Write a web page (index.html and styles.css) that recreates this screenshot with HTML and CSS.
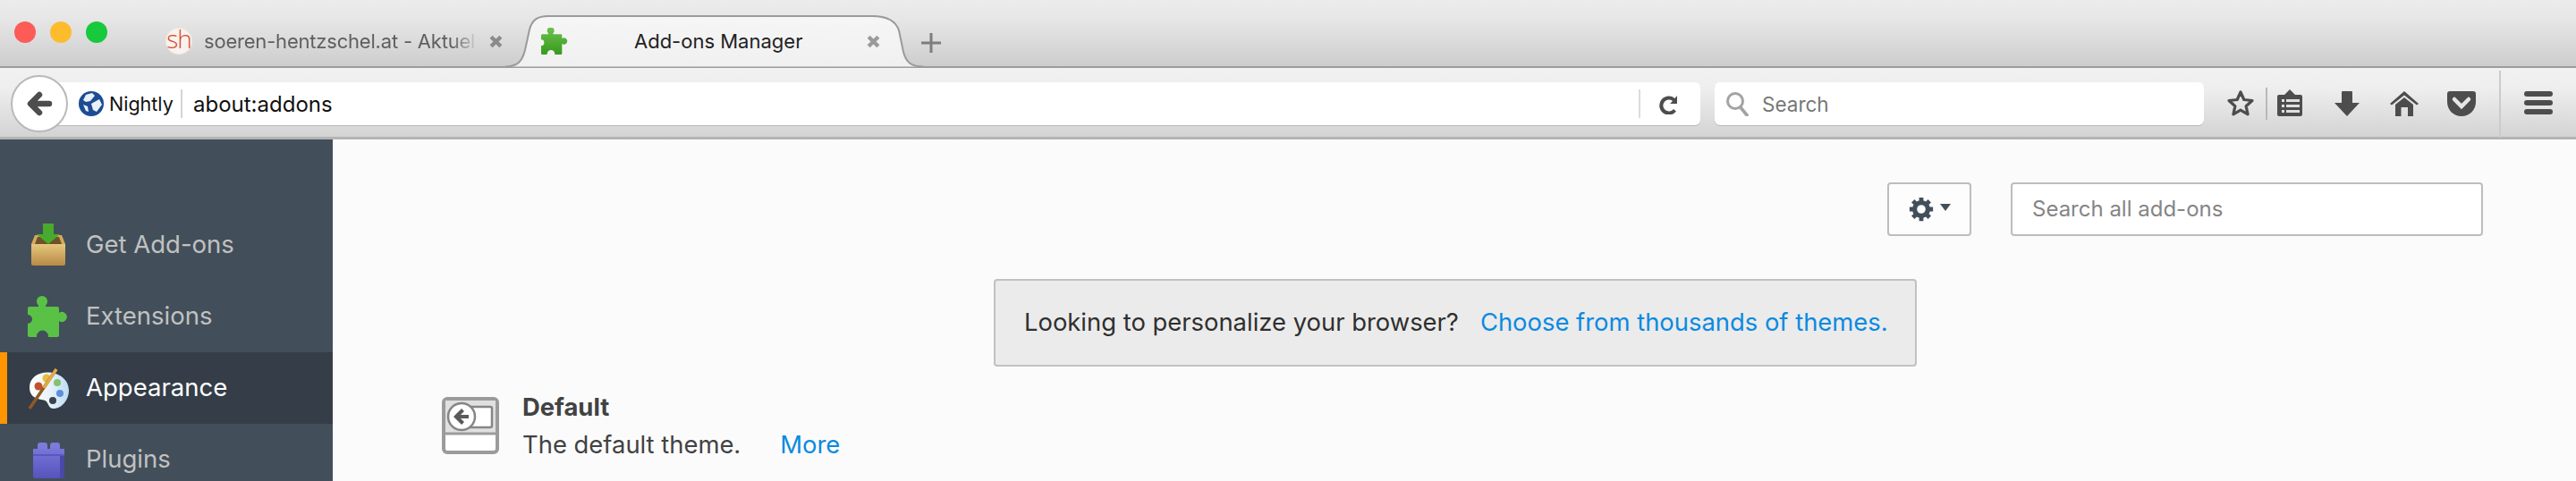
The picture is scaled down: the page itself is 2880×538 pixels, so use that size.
FILE: index.html
```html
<!DOCTYPE html>
<html lang="en">
<head>
<meta charset="utf-8">
<title>Add-ons Manager</title>
<link rel="stylesheet" href="styles.css">
</head>
<body>
<div class="window">
  <header class="tabstrip">
    <div class="lights">
      <span class="light red"></span><span class="light yellow"></span><span class="light green"></span>
    </div>
    <div class="tab">
      <span class="sh">sh</span>
      <span class="tab-title">soeren-hentzschel.at - Aktuel</span>
      <svg class="close" viewBox="0 0 14 14"><path d="M2 2l10 10M12 2L2 12" stroke="#8a8a8a" stroke-width="4" fill="none"/></svg>
    </div>
    <div class="tab active">
      <svg class="active-shape" viewBox="0 0 467 60" preserveAspectRatio="none"><defs><linearGradient id="tabfill" x1="0" y1="0" x2="0" y2="1"><stop offset="0" stop-color="#f6f6f6"/><stop offset="1" stop-color="#f0f0f0"/></linearGradient></defs><path d="M0 58.500C14 58.500 19 52 22 40L27 17C30 6 36 2 48 2H410C424 2 436 6 440 18L445 42C448 54 454 58.500 467 58.500" fill="url(#tabfill)" stroke="#9a9a9a" stroke-width="2"/></svg>
      <svg class="puzzle-small" viewBox="0 0 45 45"><defs><linearGradient id="pz" x1="0" y1="0" x2="0" y2="1"><stop offset="0" stop-color="#6cc24f"/><stop offset="1" stop-color="#379a1e"/></linearGradient></defs><path d="M2 11H12V9.500A6 6 0 1 1 20 9.500V11H33a2 2 0 0 1 2 2v5A5.500 5.500 0 1 1 35 27v16a2 2 0 0 1-2 2H23v-1A6.500 6.500 0 1 0 10 44v1H2a2 2 0 0 1-2-2V30A5 5 0 0 0 0 20V13a2 2 0 0 1 2-2z" fill="url(#pz)"/></svg>
      <span class="tab-title-active">Add-ons Manager</span>
      <svg class="close" viewBox="0 0 14 14"><path d="M2 2l10 10M12 2L2 12" stroke="#9a9a9a" stroke-width="4" fill="none"/></svg>
    </div>
    <svg class="newtab" viewBox="0 0 22 22"><path d="M11 0v22M0 11h22" stroke="#7d7d7d" stroke-width="3"/></svg>
  </header>

  <nav class="navbar">
    <div class="back">
      <svg viewBox="0 0 30 30"><path d="M15 5L5 15l10 10M7 15h19" fill="none" stroke="#4d4d4d" stroke-width="6.500" stroke-linecap="round" stroke-linejoin="round"/></svg>
    </div>
    <div class="urlbar">
      <svg class="globe" viewBox="0 0 28 28"><circle cx="14" cy="14" r="14" fill="#1c4c93"/><path d="M8 4l7-2 3 3-5 6-5 1-3-2zM14 14l9-5 3 6-6 8-4-2zM5 15l5 2 1 6-3-1z" fill="#e9f0f7"/></svg>
      <span class="brand">Nightly</span>
      <span class="url">about:addons</span>
      <span class="url-sep"></span>
      <svg class="reload" viewBox="0 0 24 24"><path d="M20 3v9h-8l3-3a6.500 6.500 0 1 0 1 9l3 2.500A10.500 10.500 0 1 1 17.500 6z" fill="#4d4d4d"/></svg>
    </div>
    <div class="searchbar">
      <svg class="mag" viewBox="0 0 28 28"><circle cx="11" cy="11" r="8.500" fill="none" stroke="#a3a3a3" stroke-width="3"/><path d="M16 17l9 11" stroke="#a3a3a3" stroke-width="3.600"/></svg>
      <span>Search</span>
    </div>
    <div class="toolbar">
      <svg class="tool star" viewBox="0 0 32 32"><path d="M16 3l3.800 8.500 9.200 1-6.900 6.200 2 9.100L16 23.200l-8.100 4.600 2-9.100L3 12.500l9.200-1z" fill="none" stroke="#4d4d4d" stroke-width="3.200" stroke-linejoin="round"/></svg>
      <span class="tool-sep"></span>
      <svg class="tool clip" viewBox="0 0 32 32"><path d="M4 6h6l6-6 6 6h6a2 2 0 0 1 2 2v20a2 2 0 0 1-2 2H4a2 2 0 0 1-2-2V8a2 2 0 0 1 2-2z" fill="#4d4d4d"/><path d="M7 11h3v3H7zM12 11h15v3H12zM7 17h3v3H7zM12 17h15v3H12zM7 23h3v3H7zM12 23h15v3H12z" fill="#e0e0e0"/></svg>
      <svg class="tool down" viewBox="0 0 32 32"><path d="M10 3a1 1 0 0 1 1-1h10a1 1 0 0 1 1 1v12h8L16 30 2 15h8z" fill="#4d4d4d"/></svg>
      <svg class="tool home" viewBox="0 0 32 32"><path d="M16 2l16 14-2 1.500L16 6.500 2 17.500 0 16z" fill="#4d4d4d"/><path d="M16 9l10 8v13h-6V20h-7.500v10H6V17z" fill="#4d4d4d"/></svg>
      <svg class="tool pocket" viewBox="0 0 32 32"><path d="M3 2h26a3 3 0 0 1 3 3v9c0 9-7 16-16 16S0 23 0 14V5a3 3 0 0 1 3-3z" fill="#4d4d4d"/><path d="M8 11l8 8 8-8" fill="none" stroke="#e6e6e6" stroke-width="4.500" stroke-linecap="round"/></svg>
      <span class="menu-sep"></span>
      <div class="hamburger"><i></i><i></i><i></i></div>
    </div>
  </nav>

  <div class="main">
    <aside class="sidebar">
      <div class="cat">
        <svg class="cat-icon" viewBox="0 0 48 50"><defs><linearGradient id="boxf" x1="0" y1="0" x2="0" y2="1"><stop offset="0" stop-color="#e6c77d"/><stop offset="1" stop-color="#b88a45"/></linearGradient></defs><path d="M8 14h30l4 10H4z" fill="#d3a95c"/><path d="M11 16h24l3 8H8z" fill="#6f5229"/><path d="M4 24h38v22a2 2 0 0 1-2 2H6a2 2 0 0 1-2-2z" fill="url(#boxf)"/><path d="M17 1h12v12h7L23 24 10 13h7z" fill="#48ab2d"/></svg>
        <span>Get Add-ons</span>
      </div>
      <div class="cat">
        <svg class="cat-icon" viewBox="0 0 48 50"><path transform="translate(0 3)" d="M2 11H12V9.500A6 6 0 1 1 20 9.500V11H33a2 2 0 0 1 2 2v5A5.500 5.500 0 1 1 35 27v16a2 2 0 0 1-2 2H23v-1A6.500 6.500 0 1 0 10 44v1H2a2 2 0 0 1-2-2V30A5 5 0 0 0 0 20V13a2 2 0 0 1 2-2z" fill="#59c246"/></svg>
        <span>Extensions</span>
      </div>
      <div class="cat selected">
        <svg class="cat-icon" viewBox="0 0 48 50"><defs><linearGradient id="pal" x1="0" y1="0" x2="1" y2="0"><stop offset="0" stop-color="#ffffff"/><stop offset="0.5" stop-color="#e9f3fa"/><stop offset="1" stop-color="#bcdcf4"/></linearGradient></defs><path d="M22 7.500c13 0 24 8 24 20 0 12-9 20.500-17 20.500-7 0-5-8-11-9.500C11 37 2 36 2 24 2 14 11 7.500 22 7.500z" fill="url(#pal)"/><circle cx="12" cy="23" r="4.500" fill="#c5512c"/><circle cx="21" cy="14" r="4.500" fill="#e6bd3f"/><circle cx="33" cy="19" r="4" fill="#85c06b"/><circle cx="36" cy="31" r="4" fill="#5d8fdb"/><circle cx="28" cy="39" r="4" fill="#3a434d"/><path d="M32 4L2 48" stroke="#8f5a26" stroke-width="3.500"/><path d="M32 4L18 25" stroke="#e2ab48" stroke-width="3.500"/></svg>
        <span>Appearance</span>
      </div>
      <div class="cat">
        <svg class="cat-icon" viewBox="0 0 48 50"><defs><linearGradient id="lego" x1="0" y1="0" x2="0" y2="1"><stop offset="0" stop-color="#7876d8"/><stop offset="1" stop-color="#5653bd"/></linearGradient></defs><rect x="11" y="6" width="11" height="10" rx="3" fill="#7c7adb"/><rect x="25" y="6" width="11" height="10" rx="3" fill="#7c7adb"/><path d="M6 13h35v31a2 2 0 0 1-2 2H8a2 2 0 0 1-2-2z" fill="url(#lego)"/><path d="M6 19h35v2H6z" fill="#5a57bf"/><path d="M36 21h5v25h-5z" fill="#4b48a6"/></svg>
        <span>Plugins</span>
      </div>
    </aside>

    <section class="content">
      <div class="header">
        <div class="gear-btn">
          <svg class="gear" viewBox="0 0 32 32"><circle cx="16" cy="16" r="8.500" fill="none" stroke="#424f5a" stroke-width="6"/><path d="M16 1v6M16 25v6M1 16h6M25 16h6M5.400 5.400l4.200 4.200M22.400 22.400l4.200 4.200M26.600 5.400l-4.200 4.200M9.600 22.400l-4.200 4.200" stroke="#424f5a" stroke-width="5.500"/></svg>
          <span class="caret"></span>
        </div>
        <div class="addon-search">Search all add-ons</div>
      </div>
      <div class="notice-row">
        <div class="notice">
          <span>Looking to personalize your browser?</span>
          <a class="link">Choose from thousands of themes.</a>
        </div>
      </div>
      <div class="addon">
        <svg class="theme-icon" viewBox="0 0 64 64"><rect x="2" y="2" width="60" height="60" rx="4" fill="#fff" stroke="#9b9b9b" stroke-width="4"/><rect x="4" y="4" width="56" height="37" fill="#e0e0e0"/><path d="M2 41h60" stroke="#9b9b9b" stroke-width="3"/><rect x="24" y="11" width="32" height="23" rx="2" fill="#fff" stroke="#868686" stroke-width="2.500"/><circle cx="22" cy="22" r="15" fill="#fff" stroke="#868686" stroke-width="2.500"/><path d="M22 13l-9 9 9 9 3-3-4-4h9v-4h-9l4-4z" fill="#5a5a5a"/></svg>
        <div class="addon-text">
          <div class="addon-name">Default</div>
          <div class="addon-desc"><span>The default theme.</span><a class="link">More</a></div>
        </div>
      </div>
    </section>
  </div>
</div>
</body>
</html>
```
FILE: styles.css
```css
* { box-sizing: border-box; }
html, body { margin: 0; height: 100%; overflow: hidden; }
body { font-family: Inter, "Liberation Sans", sans-serif; background: #fbfbfb; color: #333; }
.window { width: 2880px; height: 538px; display: flex; flex-direction: column; overflow: hidden; }

.tabstrip { height: 76px; flex: none; display: flex; align-items: flex-start; background: linear-gradient(#ececec, #e6e6e6 30%, #cdcdcd); border-bottom: 2px solid #9c9c9c; }
.lights { display: flex; gap: 16px; padding: 24px 0 0 16px; width: 172px; flex: none; }
.light { width: 24px; height: 24px; border-radius: 50%; }
.red { background: #fc5b57; }
.yellow { background: #fdbc2e; }
.green { background: #17c93d; }

.tab { display: flex; align-items: center; height: 60px; margin-top: 16px; font-size: 22px; flex: none; }
.tab:not(.active) { width: 393px; color: #5f5f5f; padding-left: 13px; }
.sh { width: 30px; height: 30px; border-radius: 50%; background: #f8f3ef; box-shadow: inset 0 0 0 1px #efe3da; color: #d9492c; font-family: "Open Sans", sans-serif; font-weight: 300; font-size: 28px; line-height: 25px; text-align: center; letter-spacing: -1px; flex: none; }
.tab-title { width: 307px; margin-left: 13px; white-space: nowrap; letter-spacing: -0.2px; overflow: hidden; -webkit-mask-image: linear-gradient(90deg, #000 90%, transparent); mask-image: linear-gradient(90deg, #000 90%, transparent); flex: none; }
.close { width: 15px; height: 15px; margin-left: 12px; flex: none; }

.tab.active { width: 467px; position: relative; color: #222; }
.active-shape { position: absolute; left: 0; top: 0; width: 467px; height: 60px; }
.puzzle-small, .tab-title-active, .tab.active .close { position: relative; }
.puzzle-small { width: 30px; height: 30px; margin-left: 40px; flex: none; }
.tab-title-active { width: 190px; margin-left: 74px; white-space: nowrap; flex: none; }
.tab.active .close { margin-left: 70px; }
.newtab { width: 22px; height: 22px; margin: 37px 0 0 -2px; flex: none; }

.navbar { height: 80px; flex: none; display: flex; align-items: center; background: linear-gradient(#f1f1f1, #eeeeee 30%, #d3d3d3); border-bottom: 3px solid #b4b4b4; padding: 3px 0 0 12px; }
.back { width: 64px; height: 64px; border-radius: 50%; background: #fff; border: 2px solid #b9b9b9; display: flex; align-items: center; justify-content: center; position: relative; z-index: 1; flex: none; }
.back svg { width: 30px; height: 30px; }
.urlbar { width: 1854px; height: 48px; margin-left: -29px; background: #fff; border-radius: 0 6px 6px 0; display: flex; align-items: center; padding-left: 41px; box-shadow: 0 1px 0 #b9b9b9; font-size: 24px; color: #111; flex: none; }
.globe { width: 28px; height: 28px; flex: none; }
.brand { margin-left: 6px; width: 82px; height: 32px; line-height: 32px; font-size: 21.500px; border-right: 2px solid #d4d4d4; flex: none; }
.url { margin-left: 12px; flex: 1; }
.url-sep { width: 2px; height: 32px; background: #dcdcdc; flex: none; }
.reload { width: 24px; height: 24px; margin: 0 22px 0 21px; flex: none; }
.searchbar { width: 547px; height: 48px; margin-left: 16px; background: #fff; border-radius: 6px; display: flex; align-items: center; padding-left: 12px; gap: 13px; box-shadow: 0 1px 0 #b9b9b9; font-size: 22.500px; color: #777; flex: none; }
.mag { width: 28px; height: 28px; flex: none; }
.toolbar { display: flex; align-items: center; height: 100%; flex: none; }
.tool { width: 32px; height: 32px; flex: none; }
.star { margin-left: 25px; }
.tool-sep { width: 2px; height: 36px; background: #b9b9b9; margin-left: 12px; flex: none; }
.clip { margin-left: 9px; }
.down, .home, .pocket { margin-left: 32px; }
.menu-sep { width: 2px; height: 75px; background: #cbcbcb; margin-left: 26px; flex: none; }
.hamburger { display: flex; flex-direction: column; gap: 4px; margin: -2px 0 0 26px; width: 32px; flex: none; }
.hamburger i { display: block; height: 6px; border-radius: 3px; background: #4d4d4d; }

.main { flex: 1; display: flex; min-height: 0; }
.sidebar { width: 372px; flex: none; background: #424f5a; padding-top: 78px; }
.cat { height: 80px; display: flex; align-items: center; padding-left: 31px; font-size: 27.500px; color: #c1c1c1; }
.cat span { padding-bottom: 3px; }
.cat-icon { width: 48px; height: 50px; margin-right: 17px; flex: none; }
.cat.selected { background: #343d48; color: #fff; border-left: 8px solid #ff9500; padding-left: 23px; }

.content { flex: 1; background: #fbfbfb; min-width: 0; }
.header { display: flex; gap: 44px; margin: 48px 0 0 1738px; height: 60px; }
.gear-btn { width: 94px; height: 60px; border: 2px solid #bdbdbd; border-radius: 4px; background: #fdfdfd; display: flex; align-items: center; padding-left: 22px; gap: 7px; flex: none; }
.gear { width: 28px; height: 28px; flex: none; }
.caret { width: 0; height: 0; border: 6.500px solid transparent; border-top: 8px solid #424f5a; border-bottom: 0; margin-top: -4px; flex: none; }
.addon-search { width: 528px; height: 60px; background: #fff; border: 2px solid #bdbdbd; border-radius: 4px; font-size: 24px; line-height: 56px; padding-left: 22px; color: #858585; flex: none; }
.notice-row { margin: 48px 0 0 739px; }
.notice { width: 1032px; height: 98px; background: #ebebeb; border: 2px solid #c1c1c1; border-radius: 4px; display: flex; align-items: center; padding: 0 0 3px 32px; gap: 24px; font-size: 27.400px; color: #2f2f2f; }
.link { color: #0a8ae0; }
.addon { display: flex; margin: 34px 0 0 122px; }
.theme-icon { width: 64px; height: 64px; margin-right: 28px; flex: none; }
.addon-text { font-size: 27.400px; color: #424242; margin-top: -9px; margin-left: -2px; }
.addon-name { font-weight: 700; height: 40px; line-height: 40px; }
.addon-desc { display: flex; gap: 44px; height: 42px; line-height: 42px; margin-top: 1px; }
```
